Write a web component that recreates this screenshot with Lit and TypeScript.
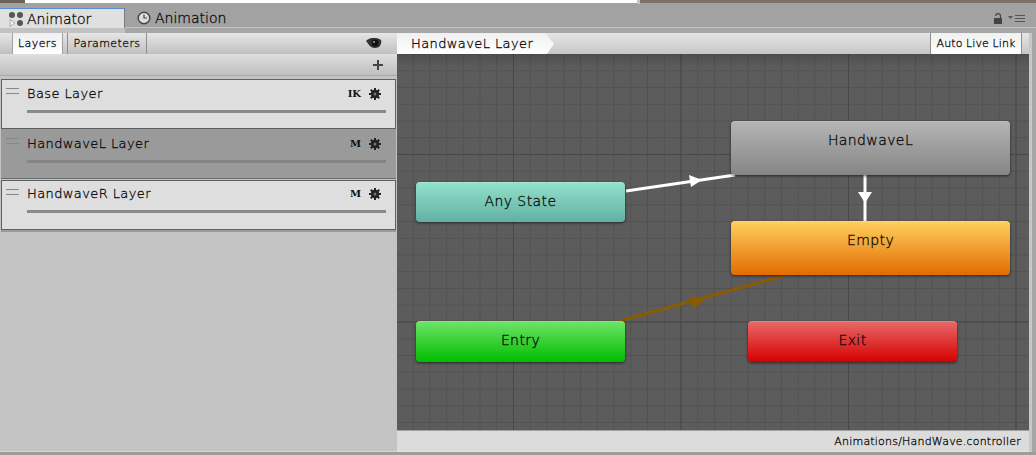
import { LitElement, html, css, svg } from "lit";
import { customElement } from "lit/decorators.js";

@customElement("app-root")
export class AppRoot extends LitElement {
  static styles = css`
    :host { display: block; width: 1036px; height: 455px; overflow: hidden; font-family: "DejaVu Sans", sans-serif; font-weight: 200; color: #000; background: #9c9c9c; -webkit-text-stroke: 0.3px #111; }
    .top { height: 8px; display: flex; background: #a2a2a2; }
    .top .a { width: 25px; height: 3px; background: #6d6358; }
    .top .b { width: 612px; height: 3px; background: #fff; }
    .top .c { width: 3px; height: 4px; background: #c4c4c4; }
    .top .d { flex: 1; height: 3px; background: #7d736a; }
    .tabs { height: 20px; display: flex; align-items: stretch; background: #a2a2a2; box-shadow: inset 0 -1px 0 #c4c4c4; }
    .tab { display: flex; align-items: center; gap: 3px; font-size: 14px; color: #000; box-sizing: border-box; }
    .tab.on { width: 125px; padding-left: 8px; background: #e0e0e0; border-top: 1px solid #5a8fd0; border-right: 1px solid #7c7c7c; }
    .tab.off { padding-left: 12px; gap: 4px; }
    .spacer { flex: 1; }
    .lockbox { display: flex; align-items: center; gap: 6px; padding-right: 11px; }
    .band { height: 5px; background: linear-gradient(to right, #c2c2c2 125px, #a6a6a6 125px); }
    .body { display: flex; height: 419px; }
    .left { width: 397px; background: #c3c3c3; display: flex; flex-direction: column; border-bottom: 1px solid #d4d4d4; box-sizing: border-box; }
    .bar1 { height: 21px; display: flex; background: linear-gradient(#e6e6e6, #c0c0c0); align-items: stretch; padding-left: 12px; }
    .ltab { font-size: 11px; display: flex; align-items: center; justify-content: center; box-sizing: border-box; color: #000; letter-spacing: 0.4px; }
    .ltab.l { width: 51px; background: linear-gradient(#f0f0f0, #fff); border-left: 1px solid #a0a0a0; border-right: 1px solid #a0a0a0; }
    .ltab.p { width: 80px; margin-left: 4px; border-left: 1px solid #8f8f8f; border-right: 1px solid #8f8f8f; }
    .eye { margin-left: auto; margin-right: 15px; align-self: center; }
    .bar2 { height: 22px; display: flex; align-items: center; justify-content: flex-end; background: linear-gradient(#dfdfdf, #bfbfbf); padding-right: 14px; border-bottom: 1px solid #a8a8a8; box-sizing: border-box; }
    .rows { display: flex; flex-direction: column; padding-top: 3px; }
    .row { position: relative; height: 50px; box-sizing: border-box; margin: 0 1px; border: 1px solid #5f5f5f; background: #dedede; display: flex; flex-direction: column; padding: 5px 9px 0 25px; }
    .row.sel { border: 0; border-bottom: 1px solid #6a6a6a; background: #9a9a9a; padding: 6px 10px 0 26px; }
    .row.last { margin-top: 1px; padding-top: 4px; box-shadow: 0 2px 0 #9a9a9a; }
    .head { display: flex; align-items: center; height: 16px; font-size: 13px; color: #000; letter-spacing: 0.4px; }
    .grip { position: absolute; left: 4px; top: 8px; width: 13px; height: 6px; border-top: 1px solid #888; border-bottom: 1px solid #888; box-sizing: border-box; }
    .sel .grip { left: 5px; top: 9px; }
    .badge { margin-left: auto; font-family: "DejaVu Serif", serif; font-size: 10px; font-weight: 700; color: #111; margin-right: 8px; letter-spacing: 0; -webkit-text-stroke: 0; }
    .gear { margin-right: 5px; margin-top: 2px; display: block; }
    .slider { height: 3px; background: #8a8a8a; margin-top: 9px; }
    .sel .slider { background: #858585; }
    .right { width: 632px; display: flex; flex-direction: column; }
    .bar3 { height: 21px; display: flex; align-items: stretch; background: linear-gradient(#e6e6e6, #c6c6c6); }
    .crumb { font-size: 13px; display: flex; align-items: center; padding-left: 14px; box-sizing: border-box; background: linear-gradient(#f0f0f0, #fff); clip-path: polygon(0 0, 148px 0, 157px 50%, 150px 100%, 0 100%); width: 158px; letter-spacing: 0.4px; }
    .auto { margin-left: auto; width: 92px; margin-right: 7px; font-size: 11px; background: linear-gradient(#f0f0f0, #fff); border-left: 1px solid #8f8f8f; border-right: 1px solid #8f8f8f; display: flex; align-items: center; justify-content: center; box-sizing: border-box; letter-spacing: 0.1px; }
    .canvas { position: relative; height: 376px; background-color: #5c5c5c; overflow: hidden;
      background-image:
        linear-gradient(to right, #484848 1px, transparent 1px),
        linear-gradient(to bottom, #484848 1px, transparent 1px),
        linear-gradient(to right, #525252 1px, transparent 1px),
        linear-gradient(to bottom, #525252 1px, transparent 1px);
      background-size: 167.5px 167.5px, 167.5px 167.5px, 16.75px 16.75px, 16.75px 16.75px;
      background-position: 116px 0, 0 100px, 15.5px 0, 0 16.25px; }
    .shade { position: absolute; inset: 0; pointer-events: none; background: linear-gradient(rgba(0,0,0,0.14), rgba(0,0,0,0) 14px); }
    .edges { position: absolute; left: 0; top: 0; }
    .node { position: absolute; box-sizing: border-box; border-radius: 4px; font-size: 14px; letter-spacing: 0.4px; color: #000; text-align: center; box-shadow: 0 1px 3px rgba(0,0,0,0.6), inset 0 1px 0 rgba(255,255,255,0.15); padding-top: 11px; }
    .any { left: 19px; top: 128px; width: 209px; height: 40px; background: linear-gradient(#93e2cb, #61b0a4); }
    .hw { left: 334px; top: 67px; width: 279px; height: 54px; background: linear-gradient(#b5b5b5, #858585); }
    .empty { left: 334px; top: 167px; width: 279px; height: 54px; background: linear-gradient(#ffd060, #e26c00); }
    .entry { left: 19px; top: 267px; width: 209px; height: 41px; background: linear-gradient(#6fe467, #00bd00); }
    .exit { left: 351px; top: 267px; width: 209px; height: 41px; background: linear-gradient(#e86a6a, #d60000); }
    .status { height: 22px; background: #dcdcdc; border-top: 1px solid #a0a0a0; border-bottom: 1px solid #e4e4e4; font-size: 11px; letter-spacing: 0.2px; color: #000; text-align: right; padding-right: 8px; line-height: 21px; box-sizing: border-box; }
    .gutter { flex: 1; background: #a6a6a6; border-left: 3px solid #c8c8c8; }
  `;

  gear() {
    return html`<svg class="gear" width="12" height="12" viewBox="0 0 12 12"><g fill="#222"><circle cx="6" cy="6" r="4.2"/><rect x="5" y="0" width="2" height="12"/><rect x="0" y="5" width="12" height="2"/><rect x="5" y="0" width="2" height="12" transform="rotate(45 6 6)"/><rect x="5" y="0" width="2" height="12" transform="rotate(-45 6 6)"/></g><circle cx="6" cy="6" r="1.5" fill="#777"/></svg>`;
  }

  row(name: string, badge: string, cls = "") {
    return html`<div class="row ${cls}"><span class="grip"></span><div class="head"><span>${name}</span><span class="badge">${badge}</span>${this.gear()}</div><div class="slider"></div></div>`;
  }

  render() {
    return html`
      <div class="top"><span class="a"></span><span class="b"></span><span class="c"></span><span class="d"></span></div>
      <div class="tabs">
        <div class="tab on">
          <svg width="16" height="16" viewBox="0 0 16 16"><g fill="#555"><circle cx="4" cy="4" r="3"/><circle cx="12" cy="4" r="3"/><circle cx="12" cy="12" r="3"/></g><path d="M2 8.5v7l5-3.5z" fill="#eee" stroke="#888" stroke-width=".6"/></svg>
          Animator
        </div>
        <div class="tab off">
          <svg width="14" height="14" viewBox="0 0 14 14"><circle cx="7" cy="7" r="5.8" fill="#ddd" stroke="#444" stroke-width="1.4"/><path d="M7 3.5V7h3" fill="none" stroke="#444" stroke-width="1.2"/></svg>
          Animation
        </div>
        <span class="spacer"></span>
        <div class="lockbox">
          <svg width="8" height="11" viewBox="0 0 8 11"><path d="M6.5 5V3a2.4 2.4 0 0 0-4.8 0" fill="none" stroke="#444" stroke-width="1.2"/><rect x="0" y="5" width="8" height="6" fill="#444"/></svg>
          <svg width="17" height="7" viewBox="0 0 17 7"><path d="M0 1h5L2.5 4z" fill="#555"/><path d="M7 0h10v1H7zM7 3h10v1H7zM7 6h10v1H7z" fill="#555"/></svg>
        </div>
      </div>
      <div class="band"></div>
      <div class="body">
        <div class="left">
          <div class="bar1">
            <div class="ltab l">Layers</div>
            <div class="ltab p">Parameters</div>
            <svg class="eye" width="16" height="11" viewBox="0 0 16 11"><path d="M0 3C4-1 11-1 15 2c1 3-1 6-2 7-4 2-8 1-10-2z" fill="#333"/><circle cx="9" cy="5" r="3.4" fill="#111"/><circle cx="8" cy="4" r="1" fill="#aaa"/></svg>
          </div>
          <div class="bar2"><svg width="10" height="10" viewBox="0 0 10 10"><path d="M4 0h2v4h4v2H6v4H4V6H0V4h4z" fill="#444"/></svg></div>
          <div class="rows">
            ${this.row("Base Layer", "IK")}
            ${this.row("HandwaveL Layer", "M", "sel")}
            ${this.row("HandwaveR Layer", "M", "last")}
          </div>
        </div>
        <div class="right">
          <div class="bar3">
            <div class="crumb">HandwaveL Layer</div>
            <div class="auto">Auto Live Link</div>
          </div>
          <div class="canvas">
            <div class="shade"></div>
            <svg class="edges" width="632" height="376">
              ${svg`<path d="M229 137L338 121" stroke="#fff" stroke-width="3" fill="none"/>
              <path d="M292 121l13 5-11 7z" fill="#fff"/>
              <path d="M468 110V170" stroke="#fff" stroke-width="3" fill="none"/>
              <path d="M461 138h14l-7 11z" fill="#fff"/>
              <path d="M222 267L386 222" stroke="#8a5c00" stroke-width="3" fill="none"/>
              <path d="M293 242l15 3-12 10z" fill="#8a5c00"/>`}
            </svg>
            <div class="node hw">HandwaveL</div>
            <div class="node any">Any State</div>
            <div class="node empty">Empty</div>
            <div class="node entry">Entry</div>
            <div class="node exit">Exit</div>
          </div>
          <div class="status">Animations/HandWave.controller</div>
        </div>
        <div class="gutter"></div>
      </div>
    `;
  }
}
